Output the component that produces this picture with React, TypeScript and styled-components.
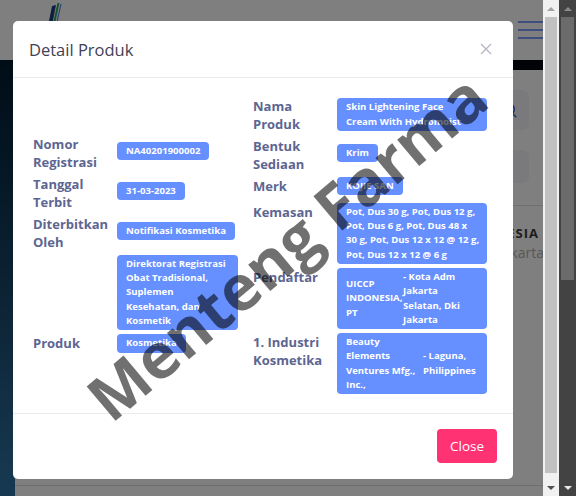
import React from "react";
import styled, { createGlobalStyle } from "styled-components";
import { Search, ChevronRight } from "lucide-react";

const GlobalStyle = createGlobalStyle`
  html, body {
    margin: 0;
    padding: 0;
  }
  body {
    font-family: "Open Sans", "Liberation Sans", sans-serif;
    overflow: hidden;
  }
  * {
    box-sizing: border-box;
  }
`;

const Frame = styled.div`
  display: flex;
  width: 576px;
  height: 496px;
  overflow: hidden;
`;

const Screen = styled.div`
  position: relative;
  flex: 1;
  overflow: hidden;
  background: #ffffff;
`;

/* ---- the page behind the modal ---- */

const Page = styled.div`
  display: flex;
  flex-direction: column;
  height: 100%;
`;

const Header = styled.header`
  height: 60px;
  flex: 0 0 auto;
  display: flex;
  align-items: flex-start;
  justify-content: space-between;
  padding: 3px 0 0 43px;
  background: #ffffff;
`;

const Burger = styled.div`
  display: flex;
  flex-direction: column;
  gap: 6px;
  width: 30px;
  margin: 18px 11px 0 0;

  span {
    height: 2px;
    background: #7e9cff;
  }
`;

const Body = styled.div`
  flex: 1;
  display: flex;
`;

const Sidebar = styled.aside`
  width: 15px;
  background: linear-gradient(180deg, #001a2e 0%, #1b4c70 60%, #2e74a4 100%);
`;

const Main = styled.main`
  flex: 1;
  display: flex;
  flex-direction: column;
  background: #ffffff;
`;

const TopStrip = styled.div`
  height: 10px;
  background: #02070d;
`;

const Tools = styled.div`
  display: flex;
  flex-direction: column;
  align-items: flex-end;
  gap: 20px;
  padding: 20px 30px 0 0;
`;

const ToolButton = styled.div<{ $h: number }>`
  width: 40px;
  height: ${(p) => p.$h}px;
  border-radius: 6px;
  background: #f4f5f9;
  display: flex;
  align-items: center;
  justify-content: center;
  color: #2f5fe0;
`;

const Divider = styled.hr`
  margin: 22px 0 0;
  border: 0;
  border-top: 1px solid #dedede;
`;

const Info = styled.div`
  padding: 17px 15px 0 0;
  text-align: right;
  white-space: nowrap;
`;

const InfoTitle = styled.div`
  font-size: 13px;
  font-weight: 700;
  letter-spacing: 1px;
  color: #3a3a3a;
  line-height: 20px;
  margin-right: 5px;
`;

const InfoSub = styled.div`
  font-size: 14px;
  color: #b0b0b0;
  line-height: 20px;
`;

const PageFoot = styled.div`
  margin-top: auto;
  height: 11px;
  border-top: 1px solid #dcdcdc;
`;

/* ---- modal ---- */

const Backdrop = styled.div`
  position: absolute;
  inset: 0;
  display: flex;
`;

const ModalArea = styled.div`
  flex: 1;
  background: rgba(0, 0, 0, 0.5);
  padding: 21px 0 0 13px;
`;

const Modal = styled.div`
  position: relative;
  width: 500px;
  height: 458px;
  background: #ffffff;
  border-radius: 5px;
  display: flex;
  flex-direction: column;
  overflow: hidden;
`;

const ModalHeader = styled.div`
  height: 57px;
  display: flex;
  align-items: center;
  justify-content: space-between;
  padding: 0 21px 0 16px;
  border-bottom: 1px solid #e9ebef;
`;

const Title = styled.h5`
  margin: 0;
  font-size: 16.5px;
  font-weight: 500;
  color: #3f4254;
`;

const ModalBody = styled.div`
  flex: 1;
  display: flex;
  align-items: center;
  gap: 15px;
  padding: 0 26px 0 20px;
`;

const DetailList = styled.div<{ $value: number }>`
  display: grid;
  grid-template-columns: 84px ${(p) => p.$value}px;
  row-gap: 4px;
`;

const Label = styled.div`
  align-self: start;
  font-size: 13px;
  font-weight: 700;
  line-height: 18px;
  color: #5d6591;
`;

const Value = styled.div`
  align-self: center;
`;

const Badge = styled.span<{ $block?: boolean }>`
  display: ${(p) => (p.$block ? "block" : "inline-block")};
  padding: 2px 9px;
  border-radius: 4px;
  background: #6690ff;
  color: #ffffff;
  font-size: 9.56px;
  font-weight: 700;
  line-height: 14.3px;
  white-space: nowrap;
  vertical-align: top;
`;

const SplitBadge = styled(Badge)<{ $lead: number }>`
  display: grid;
  grid-template-columns: ${(p) => p.$lead}px 1fr;
  align-items: center;
`;

const ModalFooter = styled.div`
  display: flex;
  justify-content: flex-end;
  padding: 15px 16px 16px;
  border-top: 1px solid #e9ebef;
`;

const CloseButton = styled.button`
  width: 60px;
  height: 34px;
  border: 0;
  border-radius: 4px;
  background: #ff3274;
  color: #ffffff;
  font-family: inherit;
  font-size: 13.5px;
  cursor: pointer;
`;

const Watermark = styled.div`
  position: absolute;
  left: 273px;
  top: 225px;
  transform: translate(-50%, -50%) rotate(-40deg);
  font-size: 63px;
  font-weight: 700;
  line-height: 1;
  white-space: nowrap;
  color: rgba(0, 0, 0, 0.56);
  pointer-events: none;
`;

/* ---- scrollbars ---- */

const Scrollbar = styled.div<{ $track: string }>`
  width: ${(p) => (p.$track === "light" ? 16 : 17)}px;
  display: flex;
  flex-direction: column;
  background: ${(p) => (p.$track === "light" ? "#f1f1f1" : "#434343")};
`;

const Arrow = styled.div<{ $dir: "up" | "down"; $color: string }>`
  height: 17px;
  display: flex;
  align-items: center;
  justify-content: center;

  &::after {
    content: "";
    border-left: 4px solid transparent;
    border-right: 4px solid transparent;
    ${(p) =>
      p.$dir === "up"
        ? `border-bottom: 4px solid ${p.$color};`
        : `border-top: 4px solid ${p.$color};`}
  }
`;

const Track = styled.div`
  flex: 1;
  padding: 0 2px;
`;

const Thumb = styled.div<{ $size: number; $color: string }>`
  height: ${(p) => p.$size}px;
  background: ${(p) => p.$color};
`;

const Logo = () => (
  <svg width="20" height="40" viewBox="0 0 20 40">
    <path d="M9 3 L13 2 L6 38 L2 38 Z" fill="#1d3f80" />
    <path d="M14.5 0 L16.5 0 L10 30 L8 30 Z" fill="#2aa364" />
    <path d="M17.5 1 L18.5 1 L12.5 28 L11.5 28 Z" fill="#3a7bd5" />
  </svg>
);

const CloseIcon = () => (
  <svg width="12" height="12" viewBox="0 0 12 12">
    <path d="M1 1 L11 11 M11 1 L1 11" stroke="#b4b6c4" strokeWidth="1.3" />
  </svg>
);

// the value text as it is broken into lines on the page
const Lines: React.FC<{ lines: string[] }> = ({ lines }) => (
  <span>
    {lines.map((line, i) => (
      <React.Fragment key={i}>
        {i > 0 && <br />}
        {line}
      </React.Fragment>
    ))}
  </span>
);

const App: React.FC = () => {
  return (
    <>
      <GlobalStyle />
      <Frame>
        <Screen>
          <Page>
            <Header>
              <Logo />
              <Burger>
                <span />
                <span />
                <span />
              </Burger>
            </Header>
            <Body>
              <Sidebar />
              <Main>
                <TopStrip />
                <Tools>
                  <ToolButton $h={40}>
                    <Search size={18} />
                  </ToolButton>
                  <ToolButton $h={33}>
                    <ChevronRight size={16} />
                  </ToolButton>
                </Tools>
                <Divider />
                <Info>
                  <InfoTitle>UICCP INDONESIA</InfoTitle>
                  <InfoSub>Jakarta</InfoSub>
                </Info>
                <PageFoot />
              </Main>
            </Body>
          </Page>

          <Backdrop>
            <ModalArea>
              <Modal>
                <ModalHeader>
                  <Title>Detail Produk</Title>
                  <CloseIcon />
                </ModalHeader>
                <ModalBody>
                  <DetailList $value={121}>
                    <Label>Nomor Registrasi</Label>
                    <Value>
                      <Badge>NA40201900002</Badge>
                    </Value>
                    <Label>Tanggal Terbit</Label>
                    <Value>
                      <Badge>31-03-2023</Badge>
                    </Value>
                    <Label>Diterbitkan Oleh</Label>
                    <Value>
                      <Badge>Notifikasi Kosmetika</Badge>
                    </Value>
                    <Label />
                    <Value>
                      <Badge $block>
                        <Lines
                          lines={[
                            "Direktorat Registrasi",
                            "Obat Tradisional,",
                            "Suplemen",
                            "Kesehatan, dan",
                            "Kosmetik",
                          ]}
                        />
                      </Badge>
                    </Value>
                    <Label>Produk</Label>
                    <Value>
                      <Badge>Kosmetika</Badge>
                    </Value>
                  </DetailList>
                  <DetailList $value={150}>
                    <Label>Nama Produk</Label>
                    <Value>
                      <Badge $block>
                        <Lines
                          lines={["Skin Lightening Face", "Cream With Hydromoist"]}
                        />
                      </Badge>
                    </Value>
                    <Label>Bentuk Sediaan</Label>
                    <Value>
                      <Badge>Krim</Badge>
                    </Value>
                    <Label>Merk</Label>
                    <Value>
                      <Badge>KOJIE SAN</Badge>
                    </Value>
                    <Label>Kemasan</Label>
                    <Value>
                      <Badge $block>
                        <Lines
                          lines={[
                            "Pot, Dus 30 g, Pot, Dus 12 g,",
                            "Pot, Dus 6 g, Pot, Dus 48 x",
                            "30 g, Pot, Dus 12 x 12 @ 12 g,",
                            "Pot, Dus 12 x 12 @ 6 g",
                          ]}
                        />
                      </Badge>
                    </Value>
                    <Label>Pendaftar</Label>
                    <Value>
                      <SplitBadge $lead={57}>
                        <Lines lines={["UICCP", "INDONESIA,", "PT"]} />
                        <Lines
                          lines={["- Kota Adm", "Jakarta", "Selatan, Dki", "Jakarta"]}
                        />
                      </SplitBadge>
                    </Value>
                    <Label>1. Industri Kosmetika</Label>
                    <Value>
                      <SplitBadge $lead={77}>
                        <Lines
                          lines={["Beauty", "Elements", "Ventures Mfg.,", "Inc.,"]}
                        />
                        <Lines lines={["- Laguna,", "Philippines"]} />
                      </SplitBadge>
                    </Value>
                  </DetailList>
                </ModalBody>
                <ModalFooter>
                  <CloseButton>Close</CloseButton>
                </ModalFooter>
                <Watermark>Menteng Farma</Watermark>
              </Modal>
            </ModalArea>
            <Scrollbar $track="light">
              <Arrow $dir="up" $color="#a3a3a3" />
              <Track>
                <Thumb $size={456} $color="#c1c1c1" />
              </Track>
              <Arrow $dir="down" $color="#505050" />
            </Scrollbar>
          </Backdrop>
        </Screen>
        <Scrollbar $track="dark">
          <Arrow $dir="up" $color="#8a8a8a" />
          <Track>
            <Thumb $size={263} $color="#6b6b6b" />
          </Track>
          <Arrow $dir="down" $color="#e8e8e8" />
        </Scrollbar>
      </Frame>
    </>
  );
};

export default App;
